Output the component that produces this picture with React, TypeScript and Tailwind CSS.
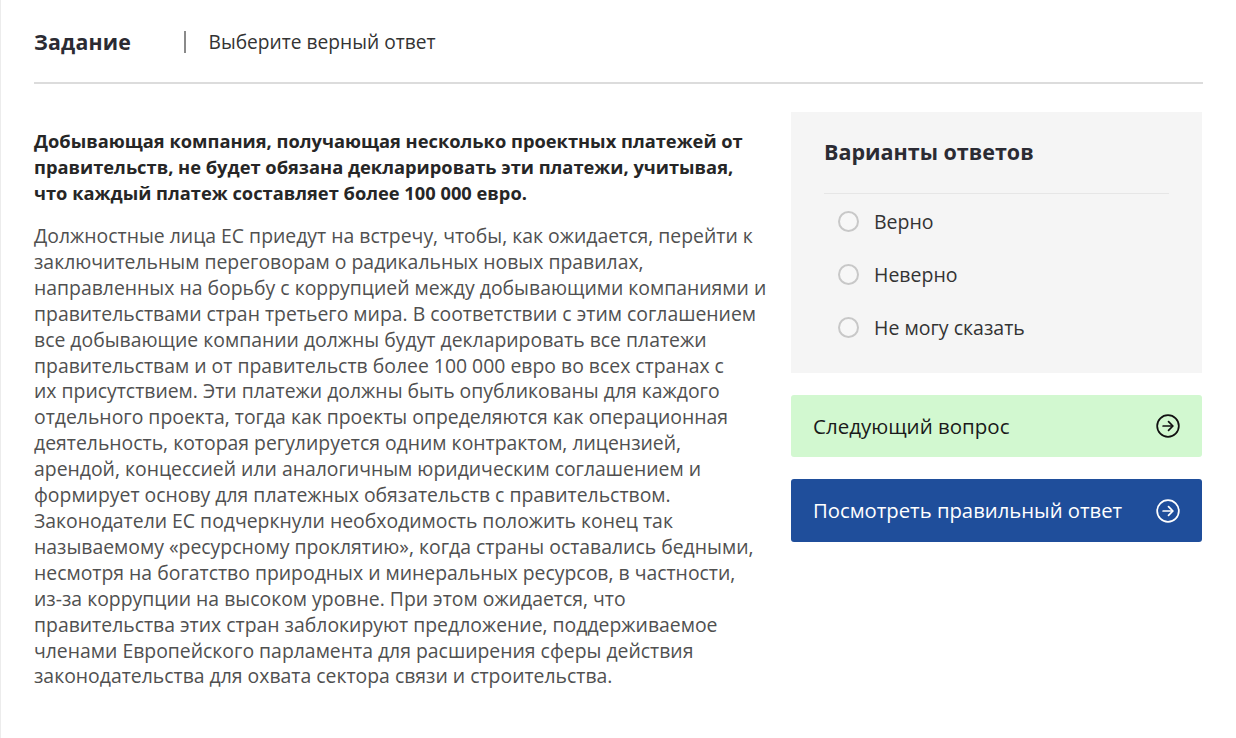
import React from "react";

const font = { fontFamily: '"Open Sans", "Noto Sans", sans-serif' };

function ArrowCircle({ className }: { className?: string }) {
  return (
    <svg viewBox="0 0 24 24" width="26" height="26" fill="none" stroke="currentColor" strokeWidth="1.6" strokeLinecap="round" strokeLinejoin="round" className={className}>
      <circle cx="12" cy="12" r="10" />
      <path d="M7.5 12h8.5" />
      <path d="m12.5 8 4 4-4 4" />
    </svg>
  );
}

const headingLines = [
  "Добывающая компания, получающая несколько проектных платежей от",
  "правительств, не будет обязана декларировать эти платежи, учитывая,",
  "что каждый платеж составляет более 100 000 евро.",
];

const bodyLines = [
  "Должностные лица ЕС приедут на встречу, чтобы, как ожидается, перейти к",
  "заключительным переговорам о радикальных новых правилах,",
  "направленных на борьбу с коррупцией между добывающими компаниями и",
  "правительствами стран третьего мира. В соответствии с этим соглашением",
  "все добывающие компании должны будут декларировать все платежи",
  "правительствам и от правительств более 100 000 евро во всех странах с",
  "их присутствием. Эти платежи должны быть опубликованы для каждого",
  "отдельного проекта, тогда как проекты определяются как операционная",
  "деятельность, которая регулируется одним контрактом, лицензией,",
  "арендой, концессией или аналогичным юридическим соглашением и",
  "формирует основу для платежных обязательств с правительством.",
  "Законодатели ЕС подчеркнули необходимость положить конец так",
  "называемому «ресурсному проклятию», когда страны оставались бедными,",
  "несмотря на богатство природных и минеральных ресурсов, в частности,",
  "из-за коррупции на высоком уровне. При этом ожидается, что",
  "правительства этих стран заблокируют предложение, поддерживаемое",
  "членами Европейского парламента для расширения сферы действия",
  "законодательства для охвата сектора связи и строительства.",
];

const options = ["Верно", "Неверно", "Не могу сказать"];

export default function App() {
  return (
    <div style={font} className="w-[1236px] h-[738px] bg-white border-l border-[#ececec] overflow-hidden">
      <div className="px-[33px]">
        <div className="h-[80px] flex items-center pt-[2px] border-b-2 border-[#dcdcdc] box-content">
          <div className="w-[150px] text-[21.3px] font-bold text-[#2b2b33] tracking-[0.2px]">Задание</div>
          <div className="w-[1.5px] h-[22px] bg-[#8a8a8a]"></div>
          <div className="ml-[23px] text-[19.2px] text-[#333]">Выберите верный ответ</div>
        </div>

        <div className="flex gap-[34px] mt-[28px]">
          <div className="w-[723px] pt-[16px]">
            <p className="text-[18.3px] leading-[26px] font-bold text-[#262626] whitespace-nowrap">
              {headingLines.map((l, i) => (
                <span key={i} className="block">{l}</span>
              ))}
            </p>
            <p className="mt-[17px] text-[19.4px] leading-[25.9px] text-[#505050] whitespace-nowrap">
              {bodyLines.map((l, i) => (
                <span key={i} className="block">{l}</span>
              ))}
            </p>
          </div>

          <div className="w-[411px] flex flex-col">
            <div className="bg-[#f5f5f5] h-[261px] px-[33px] pt-[24px]">
              <div className="text-[21.5px] font-bold text-[#2b2b33] pb-[25px] border-b border-[#e6e6e6]">Варианты ответов</div>
              <div className="flex flex-col pt-[15px] gap-[29px]">
                {options.map((o) => (
                  <label key={o} className="flex items-center h-[24px] pl-[14px]">
                    <span className="w-[21px] h-[21px] rounded-full border-2 border-[#c8c8c8] bg-[#f7f7f7]"></span>
                    <span className="ml-[15px] text-[19.5px] text-[#333]">{o}</span>
                  </label>
                ))}
              </div>
            </div>

            <button className="mt-[22px] h-[62px] rounded-[3px] bg-[#d2f8d0] flex items-center justify-between pl-[22px] pr-[21px] text-[20.5px] text-[#1a1a1a]">
              <span>Следующий вопрос</span>
              <ArrowCircle className="text-[#111]" />
            </button>
            <button className="mt-[22px] h-[63px] rounded-[3px] bg-[#1f4e9b] flex items-center justify-between pl-[22px] pr-[21px] text-[20.3px] text-white">
              <span>Посмотреть правильный ответ</span>
              <ArrowCircle className="text-white" />
            </button>
          </div>
        </div>
      </div>
    </div>
  );
}
